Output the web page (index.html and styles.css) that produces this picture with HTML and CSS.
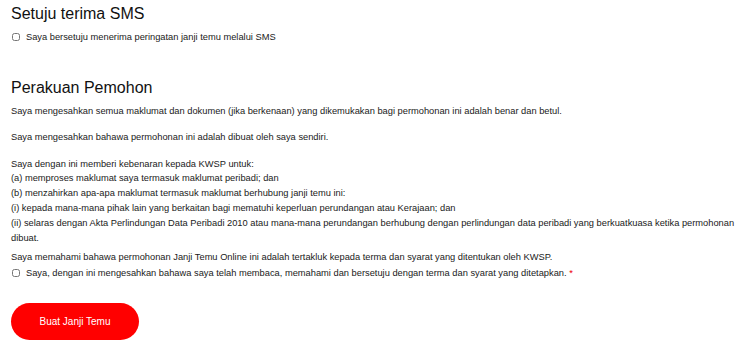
FILE: index.html
```html
<!DOCTYPE html>
<html lang="ms">
<head>
<meta charset="utf-8">
<title>Perakuan Pemohon</title>
<link rel="stylesheet" href="styles.css">
</head>
<body>
<main class="page">
  <section class="sms">
    <h2 class="title">Setuju terima SMS</h2>
    <label class="check"><input type="checkbox" class="box"><span>Saya bersetuju menerima peringatan janji temu melalui SMS</span></label>
  </section>
  <section class="declare">
    <h2 class="title">Perakuan Pemohon</h2>
    <p class="para">Saya mengesahkan semua maklumat dan dokumen (jika berkenaan) yang dikemukakan bagi permohonan ini adalah benar dan betul.</p>
    <p class="para">Saya mengesahkan bahawa permohonan ini adalah dibuat oleh saya sendiri.</p>
    <p class="para list">Saya dengan ini memberi kebenaran kepada KWSP untuk:<br>(a) memproses maklumat saya termasuk maklumat peribadi; dan<br>(b) menzahirkan apa-apa maklumat termasuk maklumat berhubung janji temu ini:<br>(i) kepada mana-mana pihak lain yang berkaitan bagi mematuhi keperluan perundangan atau Kerajaan; dan<br>(ii) selaras dengan Akta Perlindungan Data Peribadi 2010 atau mana-mana perundangan berhubung dengan perlindungan data peribadi yang berkuatkuasa ketika permohonan dibuat.</p>
    <p class="para last">Saya memahami bahawa permohonan Janji Temu Online ini adalah tertakluk kepada terma dan syarat yang ditentukan oleh KWSP.</p>
    <label class="check"><input type="checkbox" class="box"><span>Saya, dengan ini mengesahkan bahawa saya telah membaca, memahami dan bersetuju dengan terma dan syarat yang ditetapkan. <span class="req">*</span></span></label>
  </section>
  <div class="actions"><button type="button" class="btn">Buat Janji Temu</button></div>
</main>
</body>
</html>
```
FILE: styles.css
```css
html, body { margin: 0; padding: 0; background: #fff; }
body { font-family: "Liberation Sans", Arial, sans-serif; color: #1a1a1a; }
.page { padding: 4px 11px 0 11px; }
.title { font-size: 16px; font-weight: 400; margin: 0; line-height: 20px; color: #111; }
.sms .title { margin-bottom: 6px; }
.check { display: flex; align-items: center; gap: 6px; font-size: 9.3px; line-height: 14px; }
.box { margin: 0 0 0 1px; width: 8px; height: 8px; }
.declare { margin-top: 34px; }
.declare .title { margin-bottom: 6px; }
.para { font-size: 9.3px; line-height: 14.8px; margin: 0 0 11.5px 0; }
.para.list { margin-bottom: 5px; }
.para.last { margin-bottom: 1px; }
.req { color: #e00; }
.actions { margin-top: 23px; }
.btn { width: 128px; height: 37px; border: 0; border-radius: 19px; background: #ff0000; color: #fff; font-family: "Liberation Sans", Arial, sans-serif; font-size: 10px; padding: 0; }
```
